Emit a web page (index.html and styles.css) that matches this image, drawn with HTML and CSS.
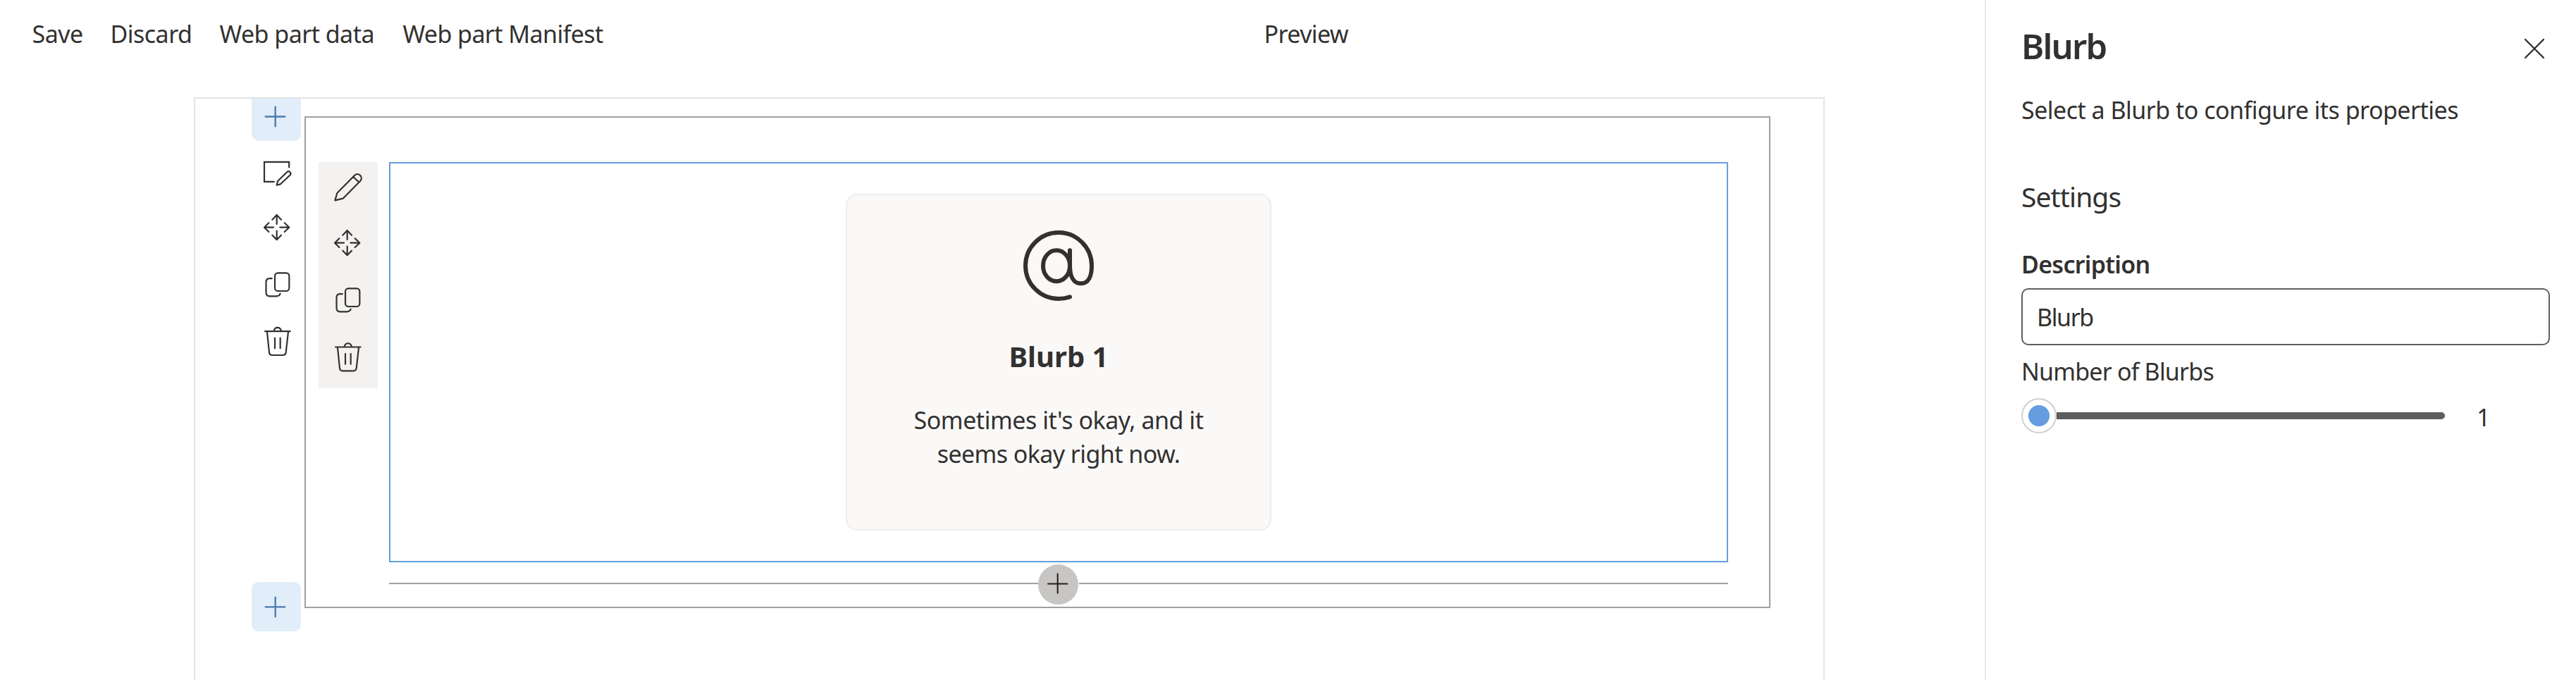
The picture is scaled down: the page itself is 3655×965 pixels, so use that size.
FILE: index.html
```
<!DOCTYPE html>
<html lang="en">
<head>
<meta charset="utf-8">
<title>Blurb</title>
<link rel="stylesheet" href="styles.css">
</head>
<body>
<svg class="defs" aria-hidden="true">
  <defs>
    <g id="move"><path d="M398 594V556M379 575L398 555L417 575M398 623V660M379 641L398 661L417 641M384 608H346M364 589L345 608L364 627M412 608H450M431 589L451 608L431 627"/></g>
    <g id="copy"><rect x="390" y="802" width="61" height="77" rx="13"/><path d="M377 825.500H368Q352.500 825.500 352.500 841V885Q352.500 901 368 901H396Q409 901 413 890"/></g>
    <g id="trash"><path d="M348 1050.500H455M386 1049C389 1030 413 1030 417 1049M357 1053L366 1141Q368 1152 378 1152H425Q435 1152 437 1141L447 1053M390 1079V1123M413 1079V1123"/></g>
  </defs>
</svg>
<div class="page">
  <main class="workbench">
    <nav class="commands">
      <span class="cmd-save">Save</span>
      <span class="cmd-discard">Discard</span>
      <span class="cmd-data">Web part data</span>
      <span class="cmd-manifest">Web part Manifest</span>
      <span class="cmd-preview">Preview</span>
    </nav>
    <div class="canvas">
      <div class="rail">
        <button class="add add-top"><svg width="70" height="60" viewBox="291 60 210 180"><path d="M392 95V178M350 136.500H433"/></svg></button>
        <svg class="tool" width="70" height="80" viewBox="291 240 210 240"><path class="square" d="M450.500 355V329.500H345V413.500H389"/><path d="M398 428L402 411L443 371A9.500 9.500 0 0 1 456 384L414 424Z"/></svg>
        <svg class="tool" width="70" height="80" viewBox="291 480 210 240"><use href="#move"/></svg>
        <svg class="tool" width="70" height="80" viewBox="291 720 210 240"><use href="#copy"/></svg>
        <svg class="tool" width="70" height="80" viewBox="291 960 210 240"><use href="#trash"/></svg>
        <button class="add add-bottom"><svg width="70" height="70" viewBox="291 138 210 210"><path d="M392 203V286M350 244H433"/></svg></button>
      </div>
      <section class="zone">
        <div class="toolbar">
          <svg class="tool" width="84" height="80" viewBox="576 330 252 240"><path d="M646 493L655 462L729 387C744 372 768 391 754 410L680 485ZM723 392L747 415"/></svg>
          <svg class="tool" width="84" height="80" viewBox="276 504 252 240"><use href="#move"/></svg>
          <svg class="tool" width="84" height="80" viewBox="276 744 252 240"><use href="#copy"/></svg>
          <svg class="tool" width="84" height="80" viewBox="276 983 252 240"><use href="#trash"/></svg>
        </div>
        <div class="column">
          <div class="webpart">
            <article class="card">
              <svg class="at" width="100" height="100" viewBox="65 50 300 300"><path d="M263 333C248 338 232 341 215 341A141 141 0 1 1 356 200C356 245 342 276 310 276C278 276 263 245 263 200V135"/><ellipse cx="206" cy="200.500" rx="57" ry="66"/></svg>
              <h2>Blurb 1</h2>
              <p><span class="line-a">Sometimes it's okay, and it</span><br><span class="line-b">seems okay right now.</span></p>
            </article>
          </div>
          <div class="divider">
            <i class="rule"></i>
            <button class="round"><svg width="57" height="57" viewBox="99 93 171 171"><path d="M182 133V215M141 175.500H223"/></svg></button>
            <i class="rule"></i>
          </div>
        </div>
      </section>
    </div>
  </main>
  <aside class="panel">
    <header><h1>Blurb</h1><svg class="close" width="28" height="28" viewBox="0 0 28 28"><path d="M1 1L27 27M27 1L1 27"/></svg></header>
    <p class="hint">Select a Blurb to configure its properties</p>
    <h3>Settings</h3>
    <label class="desc" for="description">Description</label>
    <input id="description" value="Blurb">
    <span class="count">Number of Blurbs</span>
    <div class="slider-row">
      <div class="slider"><div class="thumb"></div><div class="track"></div></div>
      <output>1</output>
    </div>
  </aside>
</div>
</body>
</html>
```
FILE: styles.css
```
* { box-sizing: border-box; margin: 0; padding: 0; }
body {
  font: 400 34px/48px "Noto Sans", sans-serif;
  color: #323130;
  background: #fff;
  overflow: hidden;
}
svg { display: block; fill: none; stroke: #323130; stroke-linecap: round; stroke-linejoin: round; }
button { border: 0; display: block; }
.defs { display: none; }
.page { display: flex; height: 965px; }

.workbench { width: 2816px; display: flex; flex-direction: column; }
.commands {
  display: grid;
  grid-template-columns: 111px 155px 260px 1222px auto;
  height: 138px;
  padding: 24px 0 0 45.5px;
  white-space: nowrap;
}
.cmd-save { letter-spacing: -.5px; }
.cmd-discard { letter-spacing: -.52px; }
.cmd-data { letter-spacing: -.53px; }
.cmd-manifest { letter-spacing: -.58px; }
.cmd-preview { letter-spacing: -.6px; }

.canvas {
  display: flex;
  gap: 5px;
  width: 2314px;
  height: 827px;
  margin-left: 275px;
  padding-left: 80px;
  border: 2px solid #e4e4e4;
  border-bottom: 0;
}
.rail { display: flex; flex-direction: column; width: 70px; height: 756px; }
.add { background: #e1edf9; border-radius: 10px; }
.add svg { stroke: #4a7ab0; stroke-width: 7; }
.add-top { height: 60px; border-radius: 0 0 10px 10px; }
.add-bottom { height: 70px; margin-top: auto; }
.tool { stroke-width: 6.5; }
.square { stroke-linecap: butt; stroke-linejoin: miter; }

.zone {
  display: flex;
  align-items: flex-start;
  gap: 16px;
  width: 2080px;
  height: 698px;
  margin-top: 25px;
  padding: 63px 58px 0 18px;
  border: 2px solid #9f9f9f;
}
.toolbar { width: 84px; height: 321px; background: #f3f2f1; }
.column { width: 1900px; }
.webpart {
  display: flex;
  justify-content: center;
  height: 568px;
  padding-top: 43px;
  border: 2px solid #669de0;
}
.card {
  width: 604px;
  height: 478px;
  padding-top: 50px;
  border: 2px solid #ededec;
  border-radius: 16px;
  background: #faf9f8;
  text-align: center;
}
.at { margin: 0 auto; stroke-width: 18; }
.card h2 { margin-top: 52px; font-size: 40px; line-height: 54px; font-weight: 700; }
.card p { margin-top: 40px; line-height: 47.5px; }
.line-a { letter-spacing: -.46px; }
.line-b { letter-spacing: -.58px; }
.divider { display: flex; align-items: center; margin-top: 3px; }
.rule { flex: 1; height: 2px; margin-bottom: 3px; background: #9f9f9f; }
.round { width: 57px; height: 57px; margin-right: 1px; border-radius: 50%; background: #c8c6c4; }
.round svg { stroke: #201f1e; stroke-width: 6; }

.panel {
  display: flex;
  flex-direction: column;
  width: 839px;
  padding: 30px 37px 0 50px;
  border-left: 2px solid #eaeaea;
}
.panel header { display: flex; justify-content: space-between; height: 68px; padding-right: 8px; }
.panel h1 { padding-top: 1px; font-size: 49px; line-height: 68px; font-weight: 600; letter-spacing: -1.8px; }
.close { margin-top: 24.5px; stroke-width: 2.4; }
.hint { margin-top: 34px; letter-spacing: -.52px; }
.panel h3 { margin-top: 72px; font-size: 39px; line-height: 54px; font-weight: 400; letter-spacing: -.9px; }
.desc { margin-top: 45px; font-weight: 600; letter-spacing: -.72px; }
.panel input {
  height: 81px;
  margin-top: 10px;
  padding: 1px 20px 0;
  border: 2px solid #605e5c;
  border-radius: 10px;
  font: inherit;
  color: inherit;
  letter-spacing: -1.4px;
}
.count { margin-top: 13px; letter-spacing: -.81px; }
.slider-row { display: flex; align-items: center; gap: 45px; margin-top: 14px; height: 50px; }
.slider { display: flex; align-items: center; width: 601px; }
.thumb { width: 50px; height: 50px; border: 2px solid #d0d0d0; border-radius: 50%; background: radial-gradient(circle, #669de0 14.6px, #fff 15.4px); }
.track { flex: 1; height: 10px; background: #605e5c; border-radius: 0 5px 5px 0; }
output { padding-top: 4px; }
```
